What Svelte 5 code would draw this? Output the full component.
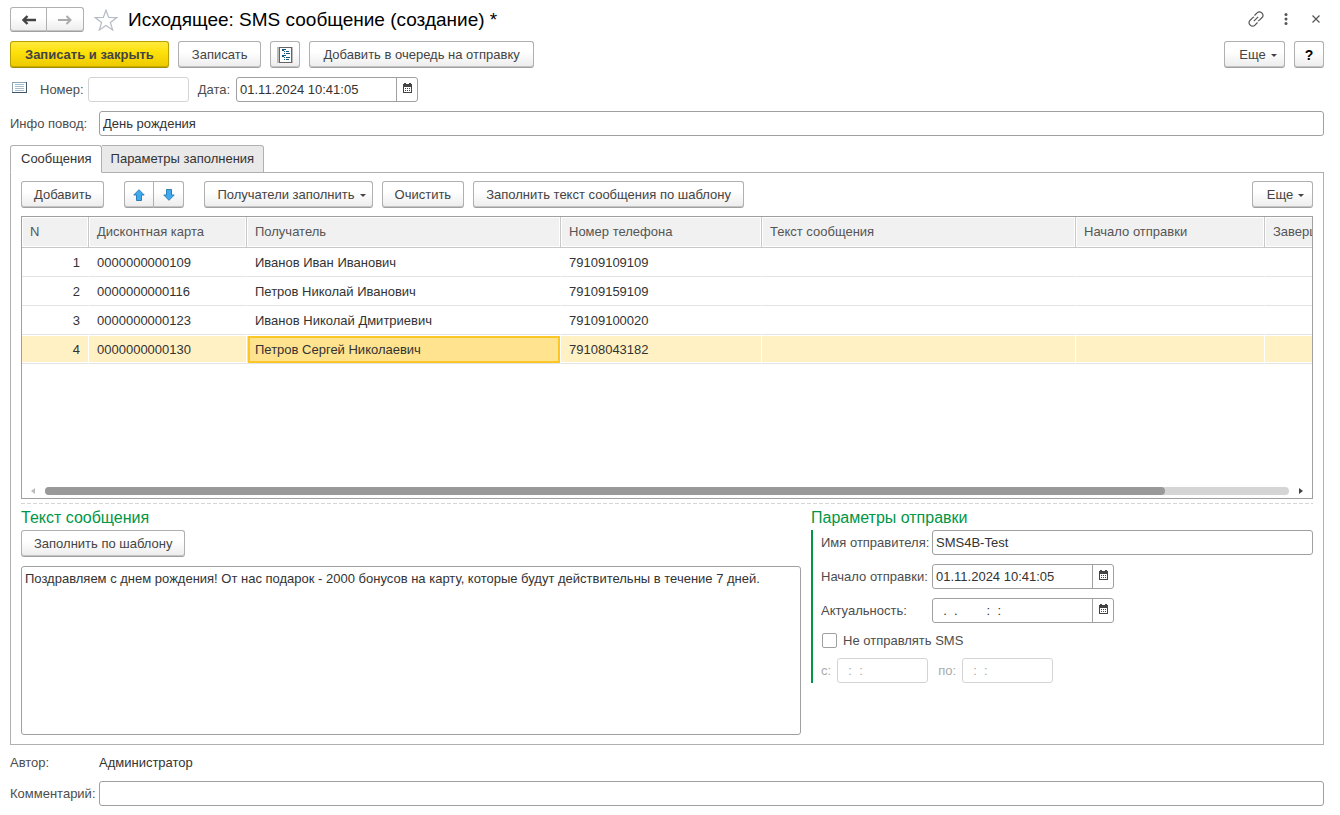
<script>
  let activeTab = $state('messages');
  let currentRow = $state(4);
  let date = $state('01.11.2024 10:41:05');
  let topic = $state('День рождения');
  let sender = $state('SMS4B-Test');
  let startDate = $state('01.11.2024 10:41:05');
  let validUntil = $state('  .  .        :  :  ');
  let muted = $state(false);
  let comment = $state('');
  let message = $state(
    'Поздравляем с днем рождения! От нас подарок - 2000 бонусов на карту, которые будут действительны в течение 7 дней.'
  );

  const tabs = [
    { id: 'messages', title: 'Сообщения' },
    { id: 'params', title: 'Параметры заполнения' }
  ];

  const columns = [
    { title: 'N', width: 67 },
    { title: 'Дисконтная карта', width: 158 },
    { title: 'Получатель', width: 314 },
    { title: 'Номер телефона', width: 201 },
    { title: 'Текст сообщения', width: 314 },
    { title: 'Начало отправки', width: 189 },
    { title: 'Завершение', width: 190 }
  ];

  const rows = [
    { n: 1, card: '0000000000109', name: 'Иванов Иван Иванович', phone: '79109109109' },
    { n: 2, card: '0000000000116', name: 'Петров Николай Иванович', phone: '79109159109' },
    { n: 3, card: '0000000000123', name: 'Иванов Николай Дмитриевич', phone: '79109100020' },
    { n: 4, card: '0000000000130', name: 'Петров Сергей Николаевич', phone: '79108043182' }
  ];
</script>

{#snippet calendar()}
  <svg width="9" height="10" viewBox="0 0 9 10" shape-rendering="crispEdges" aria-hidden="true">
    <path fill="#444" d="M0 1h1V0h2v1h3V0h2v1h1v9H0z" />
    <path fill="#fff" d="M1 4h7v5H1z" />
    <path fill="#444" d="M2 5h1v1H2zM4 5h1v1H4zM6 5h1v1H6zM2 7h1v1H2zM4 7h1v1H4zM6 7h1v1H6z" />
  </svg>
{/snippet}

{#snippet caret()}
  <svg width="6" height="3" viewBox="0 0 6 3" aria-hidden="true">
    <path fill="#444" d="M0 0h6L3 3z" />
  </svg>
{/snippet}

<main class="form">
  <header class="titlebar">
    <div class="group nav">
      <button class="btn" type="button" aria-label="Назад">
        <svg width="14" height="10" viewBox="0 0 14 10" fill="none" stroke="#444" stroke-width="2.400">
          <path d="M14 5H2M5.500 1 1.500 5l4 4" />
        </svg>
      </button>
      <button class="btn" type="button" aria-label="Вперед">
        <svg width="14" height="10" viewBox="0 0 14 10" fill="none" stroke="#aaa" stroke-width="2">
          <path d="M0 5h12M8.500 1l4 4-4 4" />
        </svg>
      </button>
    </div>
    <button class="plain star" type="button" aria-label="В избранное">
      <svg width="24" height="22" viewBox="0 0 24 22" fill="#fff" stroke="#b5bcc4" stroke-width="1.200">
        <path d="M12 1.200l2.700 7.300 8.100.100-6.400 4.900 2.300 7.500L12 16.500 5.300 21l2.300-7.500-6.400-4.900 8.100-.100z" />
      </svg>
    </button>
    <h1>Исходящее: SMS сообщение (создание) *</h1>
    <div class="window-tools">
      <button class="plain" type="button" aria-label="Получить ссылку">
        <svg width="16" height="16" viewBox="0 0 16 16" fill="none" stroke="#555" stroke-width="1.200">
          <path d="M6.500 4.500 9.300 1.700a2.900 2.900 0 0 1 4.200 0l.600.600a2.900 2.900 0 0 1 0 4.200l-2.700 2.700a2.900 2.900 0 0 1-1.500.8" />
          <path d="M9.500 11.500l-2.800 2.800a2.900 2.900 0 0 1-4.200 0l-.6-.6a2.900 2.900 0 0 1 0-4.200l2.700-2.700a2.900 2.900 0 0 1 1.500-.8" />
          <path d="M5.800 10.200l4.400-4.400" />
        </svg>
      </button>
      <button class="plain" type="button" aria-label="Меню">
        <svg width="4" height="12" viewBox="0 0 4 12" fill="#555">
          <circle cx="2" cy="1.600" r="1.500" /><circle cx="2" cy="6" r="1.500" /><circle cx="2" cy="10.400" r="1.500" />
        </svg>
      </button>
      <button class="plain" type="button" aria-label="Закрыть">
        <svg width="8" height="8" viewBox="0 0 8 8" stroke="#555" stroke-width="1.200">
          <path d="M.500.500l7 7M7.500.500l-7 7" />
        </svg>
      </button>
    </div>
  </header>

  <div class="toolbar">
    <button class="btn primary" type="button">Записать и закрыть</button>
    <button class="btn" type="button">Записать</button>
    <button class="btn icon-btn" type="button" aria-label="Отчет">
      <svg width="16" height="16" viewBox="0 0 16 16" shape-rendering="crispEdges">
        <path fill="#bbb" d="M0 0h16v16H0z" />
        <path fill="#666" d="M2 0h13v16H2z" />
        <path fill="#fff" d="M3 1h11v14H3z" />
        <path stroke="#0d5a80" d="M5 2.500h4M7 4.500h1M9 4.500h3M7 6.500h1M9 6.500h4M5 8.500h4M7 10.500h1M9 10.500h4M7 12.500h1M9 12.500h3M5 3.500h2M5 9.500h2" />
      </svg>
    </button>
    <button class="btn" type="button">Добавить в очередь на отправку</button>
    <span class="spacer"></span>
    <button class="btn more" type="button">Еще {@render caret()}</button>
    <button class="btn help" type="button">?</button>
  </div>

  <div class="line">
    <svg class="doc-icon" width="15" height="11" viewBox="0 0 15 11" shape-rendering="crispEdges" aria-hidden="true">
      <path fill="#fff" stroke="#8fa6b5" d="M.500.500h14v10H.500z" />
      <path stroke="#3d5566" d="M14.500 0v11M0 10.500h15" />
      <path stroke="#a9bccb" d="M3 2.500h9M3 4.500h9M3 6.500h9M3 8.500h9" />
    </svg>
    <label for="number">Номер:</label>
    <input id="number" class="field number" type="text" disabled />
    <label class="date-label" for="date">Дата:</label>
    <div class="picker">
      <input id="date" type="text" bind:value={date} />
      <button type="button" aria-label="Выбрать дату">{@render calendar()}</button>
    </div>
  </div>

  <div class="row">
    <label for="topic">Инфо повод:</label>
    <input id="topic" class="field" type="text" bind:value={topic} />
  </div>

  <div class="tabs" role="tablist">
    {#each tabs as tab (tab.id)}
      <button
        type="button"
        role="tab"
        class:active={activeTab === tab.id}
        aria-selected={activeTab === tab.id}
        onclick={() => (activeTab = tab.id)}>{tab.title}</button>
    {/each}
  </div>

  <section class="panel">
    <div class="toolbar">
      <button class="btn" type="button">Добавить</button>
      <div class="group move">
        <button class="btn" type="button" aria-label="Вверх">
          <svg width="12" height="12" viewBox="0 0 12 12" fill="#3fa9ee" stroke="#2f7fb5">
            <path d="M6 .700l5.200 5.300H8.500v5.500h-5V6H.800z" />
          </svg>
        </button>
        <button class="btn" type="button" aria-label="Вниз">
          <svg width="12" height="12" viewBox="0 0 12 12" fill="#3fa9ee" stroke="#2f7fb5">
            <path d="M6 11.300l5.200-5.300H8.500V.500h-5V6H.800z" />
          </svg>
        </button>
      </div>
      <button class="btn more" type="button">Получатели заполнить {@render caret()}</button>
      <button class="btn" type="button">Очистить</button>
      <button class="btn" type="button">Заполнить текст сообщения по шаблону</button>
      <span class="spacer"></span>
      <button class="btn more" type="button">Еще {@render caret()}</button>
    </div>

    <div class="grid-box">
      <div class="grid-view">
        <table>
          <colgroup>
            {#each columns as column}
              <col style="width: {column.width}px" />
            {/each}
          </colgroup>
          <thead>
            <tr>
              {#each columns as column}
                <th scope="col">{column.title}</th>
              {/each}
            </tr>
          </thead>
          <tbody>
            {#each rows as row (row.n)}
              <tr class:selected={row.n === currentRow} onclick={() => (currentRow = row.n)}>
                <td class="num">{row.n}</td>
                <td>{row.card}</td>
                <td class="name">{row.name}</td>
                <td>{row.phone}</td>
                <td></td>
                <td></td>
                <td></td>
              </tr>
            {/each}
          </tbody>
        </table>
      </div>
      <div class="scroll">
        <svg width="4" height="6" viewBox="0 0 4 6"><path fill="#bbb" d="M4 0v6L0 3z" /></svg>
        <div class="track"><div class="thumb"></div></div>
        <svg width="4" height="6" viewBox="0 0 4 6"><path fill="#444" d="M0 0v6l4-3z" /></svg>
      </div>
    </div>

    <div class="splitter"></div>

    <div class="bottom">
      <div class="text-part">
        <h2>Текст сообщения</h2>
        <button class="btn" type="button">Заполнить по шаблону</button>
        <textarea aria-label="Текст сообщения" bind:value={message}></textarea>
      </div>
      <div class="send-part">
        <h2>Параметры отправки</h2>
        <div class="params">
          <label for="sender">Имя отправителя:</label>
          <input id="sender" class="field" type="text" bind:value={sender} />
          <label for="start">Начало отправки:</label>
          <div class="picker">
            <input id="start" type="text" bind:value={startDate} />
            <button type="button" aria-label="Выбрать дату">{@render calendar()}</button>
          </div>
          <label for="valid">Актуальность:</label>
          <div class="picker">
            <input id="valid" type="text" bind:value={validUntil} />
            <button type="button" aria-label="Выбрать дату">{@render calendar()}</button>
          </div>
          <label class="check">
            <input type="checkbox" bind:checked={muted} />
            Не отправлять SMS
          </label>
          <div class="period">
            <label for="from">с:</label>
            <input id="from" class="field" type="text" value="  :  :  " disabled={!muted} />
            <label for="to">по:</label>
            <input id="to" class="field" type="text" value="  :  :  " disabled={!muted} />
          </div>
        </div>
      </div>
    </div>
  </section>

  <footer>
    <div class="row author">
      <span>Автор:</span>
      <span class="value">Администратор</span>
    </div>
    <div class="row">
      <label for="comment">Комментарий:</label>
      <input id="comment" class="field" type="text" bind:value={comment} />
    </div>
  </footer>
</main>

<style>
  :global(body) {
    margin: 0;
    background: #fff;
  }

  .form {
    box-sizing: border-box;
    min-height: 100vh;
    padding: 7px 16px 9px 10px;
    display: flex;
    flex-direction: column;
    font: 13px/16px 'Liberation Sans', Arial, sans-serif;
    color: #4d4d4d;
  }

  button,
  input,
  textarea {
    box-sizing: border-box;
    margin: 0;
    font: inherit;
    color: #333;
  }

  svg {
    display: block;
    flex: none;
  }

  label {
    white-space: nowrap;
  }

  h1 {
    margin: 0;
    font-size: 19px;
    line-height: 24px;
    font-weight: normal;
    color: #000;
  }

  h2 {
    margin: 0;
    font-size: 16px;
    line-height: 20px;
    font-weight: normal;
    color: #009646;
  }

  .titlebar {
    display: flex;
    align-items: center;
    height: 25px;
    margin-bottom: 9px;
  }

  .plain {
    display: flex;
    justify-content: center;
    padding: 0;
    border: none;
    background: none;
  }

  .star {
    margin: 0 10px;
  }

  .window-tools {
    display: flex;
    align-items: center;
    gap: 14px;
    margin-left: auto;
    padding-bottom: 2px;
  }

  .window-tools .plain {
    width: 16px;
  }

  .toolbar {
    display: flex;
    gap: 9px;
  }

  .spacer {
    flex: 1;
  }

  .btn {
    display: flex;
    align-items: center;
    justify-content: center;
    height: 27px;
    padding: 1px 13px 0;
    border: 1px solid #b0b0b0;
    border-bottom-color: #a0a0a0;
    border-radius: 3px;
    background: linear-gradient(#fff 40%, #ececec);
    box-shadow: inset 0 -1px #c4c4c4;
    color: #444;
    white-space: nowrap;
  }

  .panel .btn {
    padding: 1px 12px 0;
  }

  .primary {
    padding: 1px 14px 0;
    border-color: #b8a000;
    border-bottom-color: #a08b00;
    background: linear-gradient(#ffe940, #ffe10a 40%, #ecc900);
    box-shadow: inset 0 -1px #c9ac00;
    font-weight: bold;
  }

  .icon-btn {
    padding: 0 6px;
  }

  .more,
  .panel .more {
    gap: 5px;
    min-width: 61px;
    padding-right: 6px;
  }

  .help {
    width: 30px;
    padding: 1px 0 0;
    font-size: 14px;
    font-weight: bold;
    color: #000;
  }

  .group {
    display: flex;
  }

  .group .btn {
    padding: 0;
  }

  .group .btn:first-child {
    border-radius: 3px 0 0 3px;
  }

  .group .btn:last-child {
    border-left: none;
    border-radius: 0 3px 3px 0;
  }

  .nav .btn {
    width: 37px;
    height: 25px;
  }

  .move {
    margin: 0 11px;
  }

  .move .btn {
    width: 30px;
  }

  .line {
    display: flex;
    align-items: center;
    margin: 9px 0;
  }

  .doc-icon {
    margin: 0 13px 5px 2px;
  }

  .number {
    width: 101px;
    margin-left: 4px;
  }

  .date-label {
    margin: 0 6px 0 9px;
  }

  .field,
  .picker,
  textarea {
    height: 25px;
    border: 1px solid #a0a0a0;
    border-radius: 3px;
    background: #fff;
  }

  .field {
    min-width: 0;
    padding: 0 3px;
  }

  .field:disabled {
    border-color: #d4d4d4;
    color: #aaa;
  }

  .picker {
    box-sizing: border-box;
    display: flex;
    width: 182px;
  }

  .picker input {
    flex: 1;
    min-width: 0;
    padding: 0 3px;
    border: none;
    background: none;
  }

  .picker button {
    display: flex;
    justify-content: center;
    width: 21px;
    padding: 5px 0 0;
    border: none;
    border-left: 1px solid #a0a0a0;
    background: none;
  }

  .row {
    display: grid;
    grid-template-columns: 89px 1fr;
    align-items: center;
  }

  .tabs {
    display: flex;
    height: 28px;
    margin: 9px 0 -1px;
    z-index: 1;
  }

  .tabs button {
    padding: 0 9px;
    border: 1px solid #b0b0b0;
    border-left: none;
    border-radius: 0 3px 0 0;
    background: #e9e9e9;
  }

  .tabs button:first-child {
    padding-left: 10px;
    border-left: 1px solid #b0b0b0;
    border-radius: 3px 3px 0 0;
  }

  .tabs .active {
    border-bottom-color: #fff;
    background: #fff;
  }

  .panel {
    flex: 1;
    display: flex;
    flex-direction: column;
    padding: 8px 10px 9px;
    border: 1px solid #b0b0b0;
  }

  .grid-box {
    display: flex;
    flex-direction: column;
    min-height: 281px;
    margin-top: 8px;
    border: 1px solid #a0a0a0;
  }

  .grid-view {
    flex: 1;
    overflow: hidden;
  }

  table {
    width: 1433px;
    min-width: 100%;
    table-layout: fixed;
    border-collapse: separate;
    border-spacing: 0;
  }

  th,
  td {
    box-sizing: border-box;
    padding: 0 8px;
    text-align: left;
    font-weight: normal;
    white-space: nowrap;
  }

  th {
    height: 31px;
    border-right: 1px solid #c8c8c8;
    border-bottom: 1px solid #c8c8c8;
    background: #f1f1f1;
    box-shadow: inset 0 0 0 1px #fff;
    color: #555;
  }

  td {
    height: 29px;
    padding-top: 2px;
    border-right: 1px solid #fff;
    border-bottom: 1px solid #e3e3e3;
    color: #333;
  }

  .num {
    text-align: right;
  }

  .selected td {
    background: #fff1c4;
    box-shadow: inset 0 1px #fff, inset 0 -1px #fff;
  }

  .selected .name {
    background: #ffe38f;
    outline: 2px solid #fcc724;
    outline-offset: -3px;
  }

  .scroll {
    display: flex;
    align-items: center;
    gap: 10px;
    height: 14px;
    padding: 0 9px;
  }

  .track {
    flex: 1;
    height: 8px;
    border-radius: 4px;
    background: #d5d5d5;
  }

  .thumb {
    width: 90%;
    height: 8px;
    border-radius: 4px;
    background: #999;
  }

  .splitter {
    height: 1px;
    margin: 4px 0;
    background: repeating-linear-gradient(90deg, #d5d5d5 0 4px, #fff 4px 6px);
  }

  .bottom {
    flex: 1;
    display: grid;
    grid-template-columns: 780fr 502fr;
    gap: 10px;
  }

  .text-part {
    display: flex;
    flex-direction: column;
    align-items: flex-start;
  }

  .text-part h2,
  .send-part h2 {
    margin-bottom: 2px;
  }

  textarea {
    flex: 1;
    width: 100%;
    margin-top: 9px;
    padding: 4px 3px;
    resize: none;
  }

  .params {
    display: grid;
    grid-template-columns: 111px 1fr;
    align-items: center;
    row-gap: 9px;
    padding-left: 8px;
    border-left: 2px solid #009646;
  }

  .check,
  .period {
    grid-column: 1 / -1;
    display: flex;
    align-items: center;
  }

  .check {
    gap: 6px;
    height: 17px;
  }

  .check input {
    appearance: none;
    width: 15px;
    height: 15px;
    margin-left: 1px;
    border: 1px solid #a0a0a0;
    border-radius: 2px;
  }

  .check input:checked {
    background: #a0a0a0;
  }

  .period {
    gap: 6px;
    color: #aaa;
  }

  .period .field {
    width: 91px;
  }

  .period .field + label {
    margin-left: 4px;
  }

  .author {
    height: 36px;
  }

  .value {
    color: #333;
  }
</style>
